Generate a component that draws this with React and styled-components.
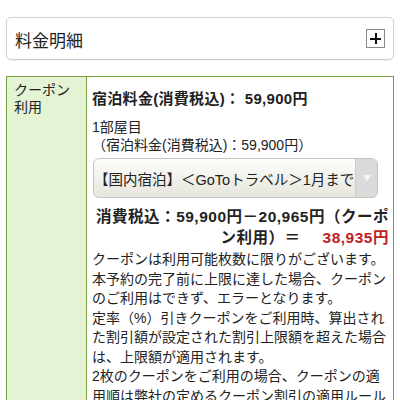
import React from 'react';
import styled, { createGlobalStyle } from 'styled-components';

const GlobalStyle = createGlobalStyle`
  body {
    margin: 0;
    background: #fff;
    font-family: "Liberation Sans", "Noto Sans CJK JP", sans-serif;
    color: #222;
  }
`;

const Page = styled.div`
  padding: 17px 6px 0 6px;
`;

const DetailHeader = styled.div`
  height: 41px;
  border: 1px solid #cfcfcf;
  border-radius: 5px;
  display: flex;
  align-items: center;
  justify-content: space-between;
  padding: 0 8px 0 8px;
  box-shadow: 0 1px 1px rgba(0, 0, 0, 0.06);
`;

const HeaderTitle = styled.div`
  font-size: 17px;
  color: #222;
  padding-top: 2px;
`;

const ToggleBox = styled.div`
  width: 17px;
  height: 17px;
  border: 1px solid #8a8a8a;
  display: flex;
  align-items: center;
  justify-content: center;
  position: relative;
  &::before,
  &::after {
    content: '';
    position: absolute;
    background: #111;
  }
  &::before {
    width: 11px;
    height: 2px;
  }
  &::after {
    width: 2px;
    height: 11px;
  }
`;

const Table = styled.div`
  margin-top: 16px;
  display: flex;
  border: 1px solid #76a03c;
  border-bottom: none;
  min-height: 330px;
`;

const LabelCell = styled.div`
  width: 72px;
  flex-shrink: 0;
  background: #e3f3d4;
  border-right: 1px solid #76a03c;
  padding: 5px 0 0 7px;
  font-size: 14px;
  line-height: 17px;
`;

const ValueCell = styled.div`
  flex: 1;
  padding: 12px 4px 0 5px;
  min-width: 0;
`;

const PriceHeading = styled.div`
  font-size: 15px;
  font-weight: 700;
  line-height: 20px;
  letter-spacing: 0.3px;
`;

const RoomInfo = styled.div`
  margin-top: 9px;
  font-size: 14px;
  line-height: 18px;
`;

const CouponSelect = styled.div`
  margin: 4px 11px 0 1px;
  height: 38px;
  border: 1px solid #c4c4bc;
  border-radius: 6px;
  background: linear-gradient(#fdfdfb, #e6e6dd);
  display: flex;
  overflow: hidden;
`;

const SelectLabel = styled.div`
  flex: 1;
  min-width: 0;
  display: flex;
  align-items: center;
  font-size: 14.5px;
  white-space: nowrap;
  overflow: hidden;
`;

const SelectArrow = styled.div`
  width: 21px;
  flex-shrink: 0;
  background: #dadada;
  border-left: 1px solid #cdcdcd;
  display: flex;
  align-items: center;
  justify-content: center;
  &::after {
    content: '';
    border-left: 4px solid transparent;
    border-right: 4px solid transparent;
    border-top: 6px solid #f6f6f6;
  }
`;

const TotalLine = styled.div`
  margin-top: 8px;
  font-size: 15.5px;
  font-weight: 700;
  line-height: 21px;
  letter-spacing: 0.5px;
  text-align: right;
`;

const Discounted = styled.span`
  color: #c0201e;
  padding-left: 22px;
`;

const Notice = styled.div`
  margin-top: 2px;
  font-size: 14px;
  line-height: 19.5px;
`;

const PRICE = '59,900';
const DISCOUNT = '20,965';
const TOTAL = '38,935';

export default function App() {
  return (
    <>
      <GlobalStyle />
      <Page>
        <DetailHeader>
          <HeaderTitle>料金明細</HeaderTitle>
          <ToggleBox />
        </DetailHeader>
        <Table>
          <LabelCell>
            クーポン
            <br />
            利用
          </LabelCell>
          <ValueCell>
            <PriceHeading>宿泊料金(消費税込)： {PRICE}円</PriceHeading>
            <RoomInfo>
              1部屋目
              <br />
              （宿泊料金(消費税込)：{PRICE}円）
            </RoomInfo>
            <CouponSelect>
              <SelectLabel>【国内宿泊】＜GoToトラベル＞1月までの宿泊</SelectLabel>
              <SelectArrow />
            </CouponSelect>
            <TotalLine>
              消費税込：{PRICE}円－{DISCOUNT}円（クーポン利用）＝
              <Discounted>{TOTAL}円</Discounted>
            </TotalLine>
            <Notice>
              クーポンは利用可能枚数に限りがございます。本予約の完了前に上限に達した場合、クーポンのご利用はできず、エラーとなります。
              <br />
              定率（%）引きクーポンをご利用時、算出された割引額が設定された割引上限額を超えた場合は、上限額が適用されます。
              <br />
              2枚のクーポンをご利用の場合、クーポンの適用順は弊社の定めるクーポン割引の適用ルールに従います。
            </Notice>
          </ValueCell>
        </Table>
      </Page>
    </>
  );
}
